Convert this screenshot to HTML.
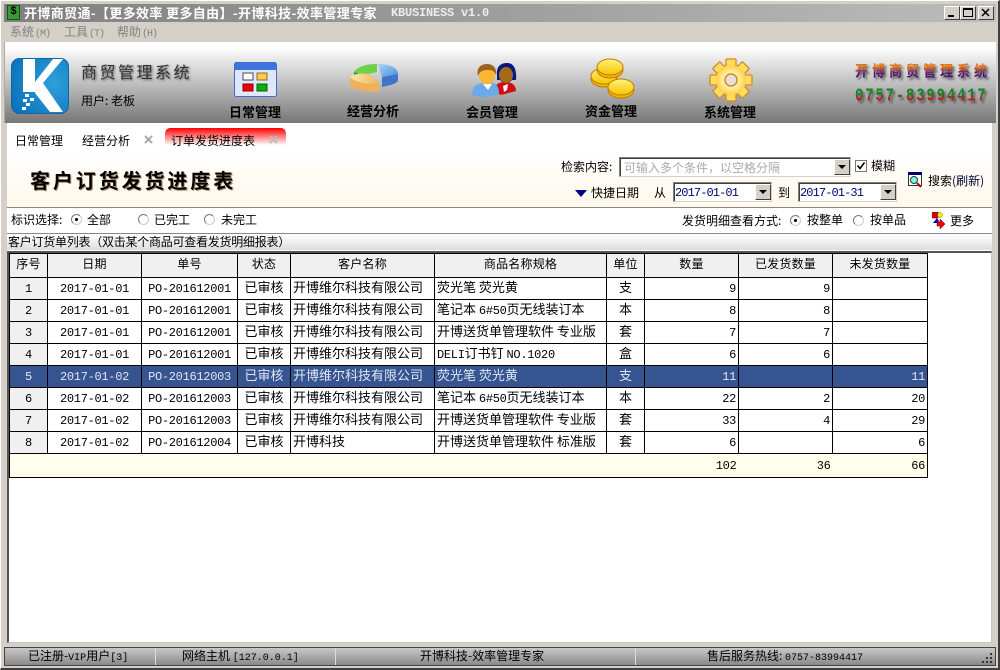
<!DOCTYPE html>
<html><head><meta charset="utf-8">
<style>
*{box-sizing:border-box;margin:0;padding:0}
html,body{width:1000px;height:670px;overflow:hidden;background:#d4d0c8}
body{position:relative;font-family:"WenQuanYi Zen Hei","Noto Sans CJK SC",sans-serif;font-size:12px;color:#000}
.a{position:absolute;white-space:nowrap;line-height:16px}
.m{font-family:"Liberation Mono",monospace;font-size:12px;letter-spacing:-.3px;line-height:1}
.btn{position:absolute;width:16px;height:16px;background:#d4d0c8;border:1px solid;border-color:#fff #404040 #404040 #fff;}
.btn:after{content:"";position:absolute;left:3px;top:5px;border:4px solid transparent;border-top:4px solid #000;border-bottom:0}
.inp{position:absolute;background:#fff;border:1px solid;border-color:#808080 #d4d0c8 #d4d0c8 #808080;box-shadow:inset 1px 1px 0 #404040;}
.r{position:absolute;width:11px;height:11px;border-radius:50%;background:#fff;border:1px solid;border-color:#777 #ccc #ccc #777}
.r.on:after{content:"";position:absolute;left:3px;top:3px;width:3px;height:3px;background:#000;border-radius:50%}
.tb{font-size:13px;font-weight:bold;text-shadow:0 0 1px #888}
table{position:absolute;left:9px;top:253px;width:918px;border-collapse:collapse;table-layout:fixed;background:#fff}
td,th{border:1px solid #000;font-weight:normal;height:22px;padding:0 2px 3px;white-space:nowrap;overflow:hidden;text-align:center;line-height:14px;font-size:13px}
th{background:#f0f0f0;height:24px;font-size:12px;letter-spacing:.2px}
td.n{background:#f0f0f0}
td.l{text-align:left}
td.g{text-align:right}
tr.s td{background:#36548f;color:#dfe6f5}
tr.t td{background:#ffffec;height:24px;border-left:0;border-right:0;text-align:right}
tr.t td:first-child{border-left:1px solid #000}
tr.t td:last-child{border-right:1px solid #000}
.st{position:absolute;top:648px;height:17px;background:linear-gradient(#c8c8c8,#8a8a8a);line-height:16px;text-align:left;white-space:nowrap;border-right:1px solid #ddd}
.st .m{font-size:10px;letter-spacing:0}
.mn{font-family:"Liberation Mono",monospace;font-size:10px;letter-spacing:-1px;margin-left:1px}
</style></head>
<body>
<div class="a" style="left:0;top:0;width:1000px;height:670px;border:1px solid #fff;border-right:2px solid #404040;border-bottom:2px solid #404040"></div>

<!-- title bar -->
<div class="a" style="left:4px;top:4px;width:992px;height:18px;background:linear-gradient(90deg,#808080,#bcbcbc)"></div>
<div class="a" style="left:7px;top:5px;width:13px;height:15px;background:#3a9a3a;border:1px solid #0a5a0a;color:#000;font:bold 11px/13px 'Liberation Mono';text-align:center">$</div>
<div class="a" style="left:24px;top:5px;color:#fff;font-size:13px;font-weight:bold;letter-spacing:.36px">开博商贸通-【更多效率 更多自由】-开博科技-效率管理专家</div>
<div class="a" style="left:391px;top:5px;color:#eee;font:bold 12px/16px 'Liberation Mono';letter-spacing:-.2px">KBUSINESS v1.0</div>
<div class="a" style="left:944px;top:6px;width:16px;height:14px;background:#d4d0c8;border:1px solid;border-color:#fff #404040 #404040 #fff"><div style="position:absolute;left:3px;top:8px;width:6px;height:2px;background:#000"></div></div>
<div class="a" style="left:960px;top:6px;width:16px;height:14px;background:#d4d0c8;border:1px solid;border-color:#fff #404040 #404040 #fff"><div style="position:absolute;left:2px;top:1px;width:10px;height:9px;border:1px solid #000;border-top-width:2px"></div></div>
<div class="a" style="left:978px;top:6px;width:16px;height:14px;background:#d4d0c8;border:1px solid;border-color:#fff #404040 #404040 #fff"><svg width="14" height="12" style="position:absolute;left:0;top:0"><path d="M3 2L10 9M10 2L3 9" stroke="#000" stroke-width="1.5"/></svg></div>

<!-- menu -->
<div class="a" style="left:10px;top:24px;color:#808080;font-size:12px">系统<span class="mn">(M)</span></div>
<div class="a" style="left:64px;top:24px;color:#808080;font-size:12px">工具<span class="mn">(T)</span></div>
<div class="a" style="left:117px;top:24px;color:#808080;font-size:12px">帮助<span class="mn">(H)</span></div>

<!-- toolbar -->
<div class="a" style="left:4px;top:42px;width:992px;height:81px;background:linear-gradient(#fff 0,#fff 6%,#c8c8c8 45%,#777);border-left:1px solid #aaa;"></div>
<svg class="a" style="left:11px;top:58px" width="58" height="56" viewBox="0 0 58 56">
<defs><radialGradient id="b" cx=".75" cy=".45" r=".8"><stop offset="0" stop-color="#2f9fdc"/><stop offset="1" stop-color="#0c74bc"/></radialGradient>
<linearGradient id="gy" x1="0" y1="0" x2="0" y2="1"><stop offset="0" stop-color="#fff27a"/><stop offset="1" stop-color="#f6c400"/></linearGradient>
<radialGradient id="gg"><stop offset="0" stop-color="#fffbd8"/><stop offset=".6" stop-color="#ffeb95"/><stop offset="1" stop-color="#ffcf40"/></radialGradient>
<linearGradient id="pb" x1="0" y1="0" x2="1" y2="1"><stop offset="0" stop-color="#a8d4fa"/><stop offset="1" stop-color="#4a8fe0"/></linearGradient>
<linearGradient id="py" x1="0" y1="0" x2="1" y2="0"><stop offset="0" stop-color="#fbe9a8"/><stop offset="1" stop-color="#eeb45e"/></linearGradient></defs>
<rect x=".5" y=".5" width="57" height="55" rx="8" fill="url(#b)" stroke="#1565a0"/>
<path d="M12 1H24V24L42 1H52L32 25L52 54H39L24 35V34H12Z" fill="#fff"/>
<path d="M14 36h4v3h-4zM19 40h4v3h-4zM12 41h4v3h-4zM15 45h4v3h-4zM11 49h4v3h-4z" fill="#fff"/>
</svg>
<div class="a" style="left:81px;top:63px;font-size:16px;letter-spacing:2.5px;color:#333;text-shadow:1px 1px 2px #555">商贸管理系统</div>
<div class="a" style="left:81px;top:93px;font-size:12px">用户: 老板</div>

<svg class="a" style="left:234px;top:62px" width="44" height="36" viewBox="0 0 44 36">
<rect x=".5" y=".5" width="42" height="34" rx="2" fill="#dfe8fa" stroke="#3f6fc5"/><rect x="1" y="1" width="41" height="7" fill="#3f74dc"/>
<rect x="9" y="11" width="10" height="7" fill="#fff" stroke="#446"/><rect x="23" y="11" width="10" height="7" fill="#fc4" stroke="#864"/>
<rect x="9" y="22" width="10" height="7" fill="#e00" stroke="#800"/><rect x="23" y="22" width="10" height="7" fill="#1a1" stroke="#060"/></svg>
<svg class="a" style="left:349px;top:63px" width="50" height="32" viewBox="0 0 50 32">
<path d="M33 12L49 11V17C49 20 43 22 33 24Z" fill="#3f76c8"/>
<path d="M5 9C9 3 18 1 28 1L28 9L15 12Z" fill="#6fd04a"/><path d="M5 9V12L15 15V12Z" fill="#3f9a2a"/>
<path d="M29 1C41 1 49 5 49 11L33 14Z" fill="url(#pb)"/>
<path d="M1 14V23C6 27 18 30 30 28V20C18 22 6 19 1 14Z" fill="#eeb05a"/><path d="M1 14C6 10 14 10 20 11L30 20C18 22 6 19 1 14Z" fill="url(#py)"/></svg>
<svg class="a" style="left:471px;top:62px" width="46" height="36" viewBox="0 0 46 36">
<path d="M24 30C23 22 28 20 34 20C42 20 45 24 45 29L30 33Z" fill="#d40c12"/><path d="M26 14C25 4 30 1 36 1C42 1 46 6 45 18H41C38 22 32 22 29 18H26Z" fill="#041a80"/><ellipse cx="35" cy="13" rx="7" ry="8" fill="#a6691c"/><path d="M32 24L37 22L36 28L33 30Z" fill="#fff"/>
<path d="M1 33C1 24 6 22 11 21H21C26 22 28 25 28 32C20 36 8 36 1 33Z" fill="#6aaae8"/><path d="M12 22L17 28L21 22Z" fill="#fff"/>
<ellipse cx="16" cy="13" rx="8" ry="9.5" fill="#fcb634"/><path d="M7 14C5 6 10 2 16 2C22 2 26 6 25 13C23 8 20 8 16 8C12 8 9 9 7 14Z" fill="#9c6420"/></svg>
<svg class="a" style="left:590px;top:58px" width="46" height="42" viewBox="0 0 46 42">
<g stroke="#c07c00"><ellipse cx="14" cy="21" rx="13" ry="8" fill="#f2b400"/><ellipse cx="14" cy="18" rx="13" ry="8" fill="url(#gy)"/>
<ellipse cx="20" cy="12" rx="13" ry="8" fill="#f2b400"/><ellipse cx="20" cy="9" rx="13" ry="8" fill="url(#gy)"/>
<ellipse cx="31" cy="32" rx="13" ry="8" fill="#f2b400"/><ellipse cx="31" cy="29" rx="13" ry="8" fill="url(#gy)"/></g></svg>
<svg class="a" style="left:709px;top:58px" width="44" height="44" viewBox="0 0 44 44">
<circle cx="22" cy="22" r="15" fill="#ffd860" stroke="#d88a18" stroke-width="1.3"/>
<g fill="#ffdc60" stroke="#d88a18" stroke-width="1.3"><rect x="17" y="1" width="10" height="10" rx="1"/><rect x="17" y="1" width="10" height="10" rx="1" transform="rotate(45 22 22)"/><rect x="17" y="1" width="10" height="10" rx="1" transform="rotate(90 22 22)"/><rect x="17" y="1" width="10" height="10" rx="1" transform="rotate(135 22 22)"/><rect x="17" y="1" width="10" height="10" rx="1" transform="rotate(180 22 22)"/><rect x="17" y="1" width="10" height="10" rx="1" transform="rotate(225 22 22)"/><rect x="17" y="1" width="10" height="10" rx="1" transform="rotate(270 22 22)"/><rect x="17" y="1" width="10" height="10" rx="1" transform="rotate(315 22 22)"/></g>
<circle cx="22" cy="22" r="15" fill="url(#gg)"/>
<circle cx="22" cy="22" r="6" fill="#e0e0e0" stroke="#d88a18" stroke-width="1.5"/></svg>
<div class="a tb" style="left:229px;top:104px">日常管理</div>
<div class="a tb" style="left:347px;top:103px">经营分析</div>
<div class="a tb" style="left:466px;top:104px">会员管理</div>
<div class="a tb" style="left:585px;top:103px">资金管理</div>
<div class="a tb" style="left:704px;top:104px">系统管理</div>
<div class="a" style="left:855px;top:61px;font-size:13px;font-weight:bold;letter-spacing:4px;transform:scaleY(1.15);transform-origin:0 0;background:linear-gradient(#f07000 30%,#50107a 70%);-webkit-background-clip:text;background-clip:text;color:transparent;filter:drop-shadow(2px 2px 1px #555)">开博商贸管理系统</div>
<div class="a" style="left:855px;top:86px;font:bold 14px/16px 'Liberation Mono';letter-spacing:1.8px;transform:scaleY(1.3);transform-origin:0 0;background:linear-gradient(#0a8a20 35%,#d01020 65%);-webkit-background-clip:text;background-clip:text;color:transparent;filter:drop-shadow(2px 2px 1px #555)">0757-83994417</div>

<!-- content -->
<div class="a" style="left:7px;top:123px;width:985px;height:520px;background:#fff"></div>
<div class="a" style="left:7px;top:150px;width:985px;height:58px;background:linear-gradient(#fff,#fff8ea)"></div>
<div class="a" style="left:165px;top:128px;width:121px;height:20px;border-radius:5px 5px 0 0;background:linear-gradient(#f00,#fff 85%)"></div>
<div class="a" style="left:15px;top:133px;font-size:12px">日常管理</div>
<div class="a" style="left:82px;top:133px;font-size:12px">经营分析</div>
<div class="a" style="left:171px;top:133px;font-size:12px">订单发货进度表</div>
<svg class="a" style="left:144px;top:135px" width="10" height="10"><path d="M1 1L8 8M8 1L1 8" stroke="#aaa" stroke-width="2"/></svg>
<svg class="a" style="left:269px;top:135px" width="10" height="10"><path d="M1 1L8 8M8 1L1 8" stroke="#bbb" stroke-width="2"/></svg>
<div class="a" style="left:30px;top:170px;font-size:20px;line-height:20px;font-weight:bold;letter-spacing:2.9px;text-shadow:1px 1px 0 #a86">客户订货发货进度表</div>

<div class="a" style="left:561px;top:159px">检索内容:</div>
<div class="inp" style="left:619px;top:157px;width:232px;height:20px"></div>
<div class="a" style="left:624px;top:160px;color:#aaa">可输入多个条件，以空格分隔</div>
<div class="btn" style="left:834px;top:159px"></div>
<div class="a" style="left:855px;top:160px;width:12px;height:12px;background:#fff;border:1px solid #777"><svg width="10" height="10" style="position:absolute;left:0;top:0"><path d="M1.5 4.5L4 7.5L8.5 1.5" fill="none" stroke="#000" stroke-width="1.6"/></svg></div>
<div class="a" style="left:871px;top:158px">模糊</div>
<div class="a" style="left:575px;top:190px;border:6.5px solid transparent;border-top:7px solid #000080;border-bottom:0"></div>
<div class="a" style="left:591px;top:185px">快捷日期</div>
<div class="a" style="left:654px;top:185px">从</div>
<div class="inp" style="left:673px;top:182px;width:99px;height:20px"></div>
<div class="a m" style="left:675px;top:185px;line-height:16px;color:#000070;letter-spacing:-.9px">2017-01-01</div>
<div class="btn" style="left:755px;top:184px"></div>
<div class="a" style="left:778px;top:185px">到</div>
<div class="inp" style="left:798px;top:182px;width:99px;height:20px"></div>
<div class="a m" style="left:800px;top:185px;line-height:16px;color:#000070;letter-spacing:-.9px">2017-01-31</div>
<div class="btn" style="left:880px;top:184px"></div>
<svg class="a" style="left:908px;top:172px" width="15" height="16" viewBox="0 0 15 16"><rect x=".5" y=".5" width="13" height="13" fill="#fff" stroke="#333"/><rect y="0" width="14" height="3" fill="#000070"/><circle cx="6" cy="8" r="3.5" fill="#7fd" stroke="#333"/><path d="M9 11L13 15" stroke="#b00" stroke-width="2"/></svg>
<div class="a" style="left:928px;top:173px;font-size:12px">搜索<span style="color:#003">(刷新)</span></div>

<div class="a" style="left:7px;top:207px;width:985px;height:1px;background:#888"></div>
<div class="a" style="left:11px;top:212px">标识选择:</div>
<div class="r on" style="left:71px;top:214px"></div><div class="a" style="left:87px;top:212px">全部</div>
<div class="r" style="left:138px;top:214px"></div><div class="a" style="left:154px;top:212px">已完工</div>
<div class="r" style="left:204px;top:214px"></div><div class="a" style="left:221px;top:212px">未完工</div>
<div class="a" style="left:682px;top:213px">发货明细查看方式:</div>
<div class="r on" style="left:790px;top:215px"></div><div class="a" style="left:807px;top:212px">按整单</div>
<div class="r" style="left:853px;top:215px"></div><div class="a" style="left:870px;top:212px">按单品</div>
<svg class="a" style="left:932px;top:212px" width="18" height="18" viewBox="0 0 18 18"><rect x="0" y="0" width="6" height="6" fill="#d00" stroke="#600" stroke-width=".6"/><circle cx="8" cy="3" r="2.4" fill="#fe0" stroke="#860" stroke-width=".5"/><path d="M1 11L5 6L8 11Z" fill="#00b"/><path d="M8 7L13 12L8 17V14H5V10H8Z" fill="#e00" stroke="#600" stroke-width=".5"/></svg>
<div class="a" style="left:950px;top:213px">更多</div>
<div class="a" style="left:7px;top:233px;width:985px;height:1px;background:#888"></div>
<div class="a" style="left:7px;top:234px;width:985px;height:16px;background:linear-gradient(#fff,#ddd)"></div>
<div class="a" style="left:8px;top:234px;font-size:12px;letter-spacing:-.25px">客户订货单列表（双击某个商品可查看发货明细报表）</div>

<!-- grid frame -->
<div class="a" style="left:7px;top:251px;width:985px;height:392px;background:#fff;border:2px solid #555;border-bottom:1px solid #c8c8c0;border-right:1px solid #c8c8c0"></div>
<table>
<colgroup><col style="width:38px"><col style="width:94px"><col style="width:96px"><col style="width:53px"><col style="width:144px"><col style="width:172px"><col style="width:38px"><col style="width:94px"><col style="width:94px"><col style="width:95px"></colgroup>
<tr><th>序号</th><th>日期</th><th>单号</th><th>状态</th><th>客户名称</th><th>商品名称规格</th><th>单位</th><th>数量</th><th>已发货数量</th><th>未发货数量</th></tr>
<tr><td class="n"><span class="m">1</span></td><td><span class="m">2017-01-01</span></td><td><span class="m">PO-201612001</span></td><td>已审核</td><td class="l">开博维尔科技有限公司</td><td class="l">荧光笔 荧光黄</td><td>支</td><td class="g"><span class="m">9</span></td><td class="g"><span class="m">9</span></td><td></td></tr>
<tr><td class="n"><span class="m">2</span></td><td><span class="m">2017-01-01</span></td><td><span class="m">PO-201612001</span></td><td>已审核</td><td class="l">开博维尔科技有限公司</td><td class="l">笔记本 <span class="m">6#50</span>页无线装订本</td><td>本</td><td class="g"><span class="m">8</span></td><td class="g"><span class="m">8</span></td><td></td></tr>
<tr><td class="n"><span class="m">3</span></td><td><span class="m">2017-01-01</span></td><td><span class="m">PO-201612001</span></td><td>已审核</td><td class="l">开博维尔科技有限公司</td><td class="l">开博送货单管理软件 专业版</td><td>套</td><td class="g"><span class="m">7</span></td><td class="g"><span class="m">7</span></td><td></td></tr>
<tr><td class="n"><span class="m">4</span></td><td><span class="m">2017-01-01</span></td><td><span class="m">PO-201612001</span></td><td>已审核</td><td class="l">开博维尔科技有限公司</td><td class="l"><span class="m">DELI</span>订书钉 <span class="m">NO.1020</span></td><td>盒</td><td class="g"><span class="m">6</span></td><td class="g"><span class="m">6</span></td><td></td></tr>
<tr class="s"><td><span class="m">5</span></td><td><span class="m">2017-01-02</span></td><td><span class="m">PO-201612003</span></td><td>已审核</td><td class="l">开博维尔科技有限公司</td><td class="l">荧光笔 荧光黄</td><td>支</td><td class="g"><span class="m">11</span></td><td class="g"></td><td class="g"><span class="m">11</span></td></tr>
<tr><td class="n"><span class="m">6</span></td><td><span class="m">2017-01-02</span></td><td><span class="m">PO-201612003</span></td><td>已审核</td><td class="l">开博维尔科技有限公司</td><td class="l">笔记本 <span class="m">6#50</span>页无线装订本</td><td>本</td><td class="g"><span class="m">22</span></td><td class="g"><span class="m">2</span></td><td class="g"><span class="m">20</span></td></tr>
<tr><td class="n"><span class="m">7</span></td><td><span class="m">2017-01-02</span></td><td><span class="m">PO-201612003</span></td><td>已审核</td><td class="l">开博维尔科技有限公司</td><td class="l">开博送货单管理软件 专业版</td><td>套</td><td class="g"><span class="m">33</span></td><td class="g"><span class="m">4</span></td><td class="g"><span class="m">29</span></td></tr>
<tr><td class="n"><span class="m">8</span></td><td><span class="m">2017-01-02</span></td><td><span class="m">PO-201612004</span></td><td>已审核</td><td class="l">开博科技</td><td class="l">开博送货单管理软件 标准版</td><td>套</td><td class="g"><span class="m">6</span></td><td class="g"></td><td class="g"><span class="m">6</span></td></tr>
<tr class="t"><td></td><td></td><td></td><td></td><td></td><td></td><td></td><td><span class="m">102</span></td><td><span class="m">36</span></td><td><span class="m">66</span></td></tr>
</table>

<!-- status bar -->
<div class="a" style="left:4px;top:647px;width:992px;height:19px;background:#444"></div>
<div class="st" style="left:5px;width:151px;padding-left:23px">已注册-<span class="m">VIP</span>用户<span class="m">[3]</span></div>
<div class="st" style="left:156px;width:180px;padding-left:26px">网络主机 <span class="m">[127.0.0.1]</span></div>
<div class="st" style="left:336px;width:300px;padding-left:84px">开博科技-效率管理专家</div>
<div class="st" style="left:636px;width:359px;border:0;padding-left:71px">售后服务热线: <span class="m">0757-83994417</span></div>
<svg class="a" style="left:981px;top:652px" width="13" height="12"><path d="M9 1h2v2h-2zM5 5h2v2h-2zM9 5h2v2h-2zM1 9h2v2h-2zM5 9h2v2h-2zM9 9h2v2h-2z" fill="#333"/></svg>
</body></html>
